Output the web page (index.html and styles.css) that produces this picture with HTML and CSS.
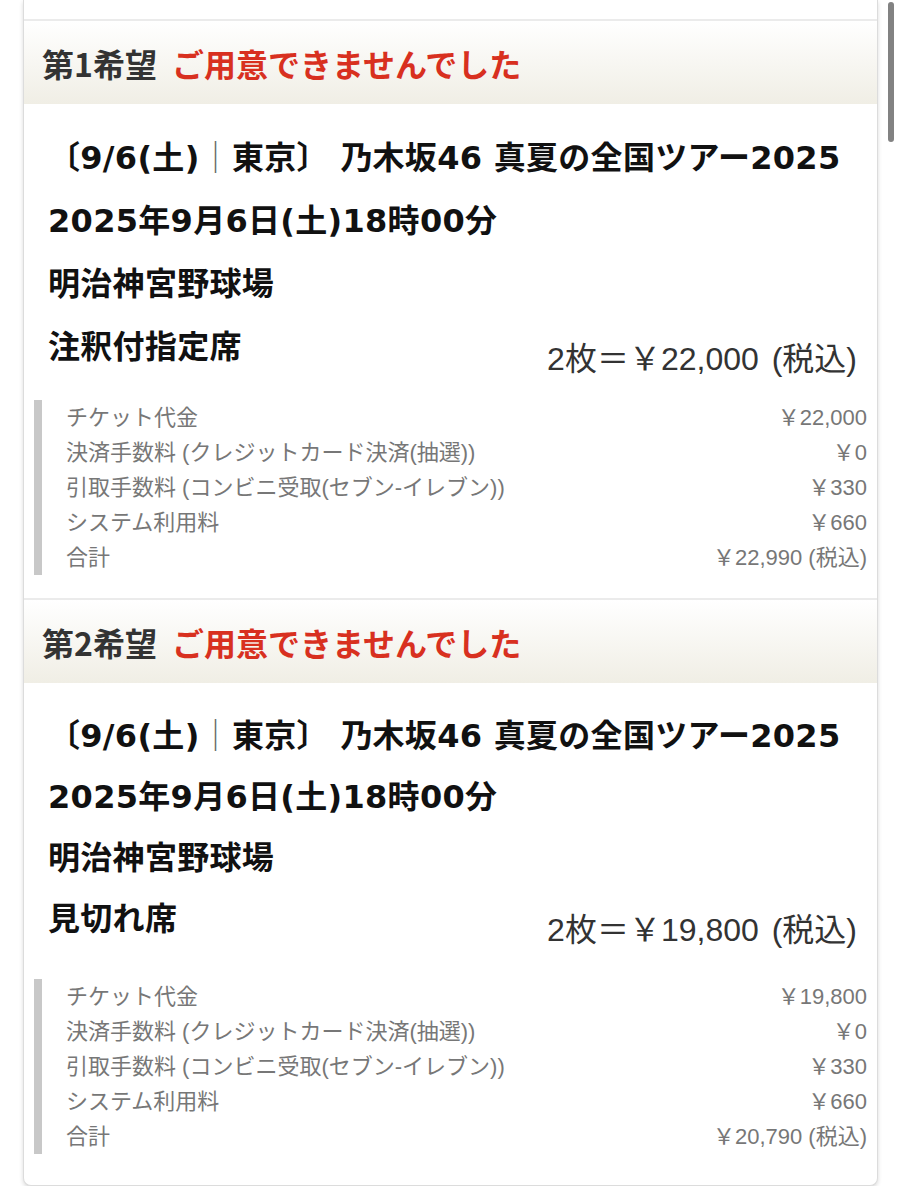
FILE: index.html
```html
<!DOCTYPE html>
<html lang="ja">
<head>
    <meta charset="UTF-8">
    <meta name="viewport" content="width=device-width, initial-scale=1.0">
    <title>申込内容</title>
    <link rel="stylesheet" href="styles.css">
</head>
<body>

    <!-- Lottery result card -->
    <div class="card">
        <div class="card-top"></div>

        <!-- 1st choice -->
        <div class="choice-head">
            <span class="choice-no">第1希望</span>
            <span class="choice-result">ご用意できませんでした</span>
        </div>
        <div class="choice-body">
            <p class="event-line">〔9/6(土)<span class="bar">｜</span>東京〕 乃木坂46 真夏の全国ツアー2025</p>
            <p class="event-line">2025年9月6日(土)18時00分</p>
            <p class="event-line">明治神宮野球場</p>
            <div class="seat-row">
                <p class="event-line">注釈付指定席</p>
                <div class="seat-price">2枚＝￥22,000 <span class="tax">(税込)</span></div>
            </div>
            <ul class="fees">
                <li><span>チケット代金</span><span>￥22,000</span></li>
                <li><span>決済手数料 (クレジットカード決済(抽選))</span><span>￥0</span></li>
                <li><span>引取手数料 (コンビニ受取(セブン-イレブン))</span><span>￥330</span></li>
                <li><span>システム利用料</span><span>￥660</span></li>
                <li><span>合計</span><span>￥22,990 (税込)</span></li>
            </ul>
        </div>

        <!-- 2nd choice -->
        <div class="choice-head">
            <span class="choice-no">第2希望</span>
            <span class="choice-result">ご用意できませんでした</span>
        </div>
        <div class="choice-body last">
            <p class="event-line">〔9/6(土)<span class="bar">｜</span>東京〕 乃木坂46 真夏の全国ツアー2025</p>
            <p class="event-line">2025年9月6日(土)18時00分</p>
            <p class="event-line">明治神宮野球場</p>
            <div class="seat-row">
                <p class="event-line">見切れ席</p>
                <div class="seat-price">2枚＝￥19,800 <span class="tax">(税込)</span></div>
            </div>
            <ul class="fees">
                <li><span>チケット代金</span><span>￥19,800</span></li>
                <li><span>決済手数料 (クレジットカード決済(抽選))</span><span>￥0</span></li>
                <li><span>引取手数料 (コンビニ受取(セブン-イレブン))</span><span>￥330</span></li>
                <li><span>システム利用料</span><span>￥660</span></li>
                <li><span>合計</span><span>￥20,790 (税込)</span></li>
            </ul>
        </div>
    </div>

    <!-- overlay scrollbar -->
    <div class="scroll-thumb"></div>

</body>
</html>
```

FILE: styles.css
```css
body {
    margin: 0;
    background-color: #ffffff;
    font-family: "Liberation Sans", "Noto Sans CJK JP", sans-serif;
    color: #111;
}

.card {
    margin: 0 24px 0 23px;
    background-color: #fff;
    border-left: 1px solid #dcdcdc;
    border-right: 1px solid #dcdcdc;
    border-bottom: 1px solid #dcdcdc;
    border-radius: 0 0 8px 8px;
    box-shadow: 0 2px 4px rgba(0, 0, 0, 0.15);
}

.card-top {
    height: 19px;
}

.choice-head {
    height: 85px;
    display: flex;
    align-items: center;
    gap: 15px;
    padding-left: 18px;
    box-sizing: border-box;
    border-top: 2px solid #ebebeb;
    background: linear-gradient(to bottom, #ffffff, #f0eee5);
    font-family: "Noto Sans CJK JP", sans-serif;
    font-size: 32px;
    font-weight: bold;
}

.choice-no {
    color: #333;
}

.choice-result {
    color: #d8301f;
}

.choice-body {
    padding: 20px 10px 23px 24px;
}

.choice-body.last {
    padding-bottom: 31px;
}

.event-line {
    margin: 0;
    font-family: "DejaVu Sans", "Noto Sans CJK JP", sans-serif;
    font-size: 32px;
    line-height: 63px;
    font-weight: bold;
    letter-spacing: 0.3px;
    color: #111;
    white-space: nowrap;
}

.last .event-line {
    line-height: 61px;
}

.event-line .bar {
    font-family: "Noto Sans CJK JP", sans-serif;
    font-weight: normal;
    color: #666;
}

.seat-row {
    display: flex;
    justify-content: space-between;
    align-items: flex-end;
    height: 63px;
}

.last .seat-row {
    height: 61px;
}

.seat-row .event-line {
    align-self: flex-start;
}

.seat-price {
    padding-right: 10px;
    font-size: 32px;
    line-height: 40px;
    color: #333;
}

.seat-price .tax {
    margin-left: 4px;
}

.fees {
    list-style: none;
    margin: 21px 0 0 -14px;
    padding: 0 0 0 24px;
    border-left: 8px solid #c8c8c8;
}

.last .fees {
    margin-top: 29px;
}

.fees li {
    display: flex;
    justify-content: space-between;
    font-size: 22px;
    line-height: 35px;
    color: #777;
}

.scroll-thumb {
    position: absolute;
    top: 2px;
    left: 888px;
    width: 6px;
    height: 140px;
    border-radius: 3px;
    background-color: #828282;
}
```
